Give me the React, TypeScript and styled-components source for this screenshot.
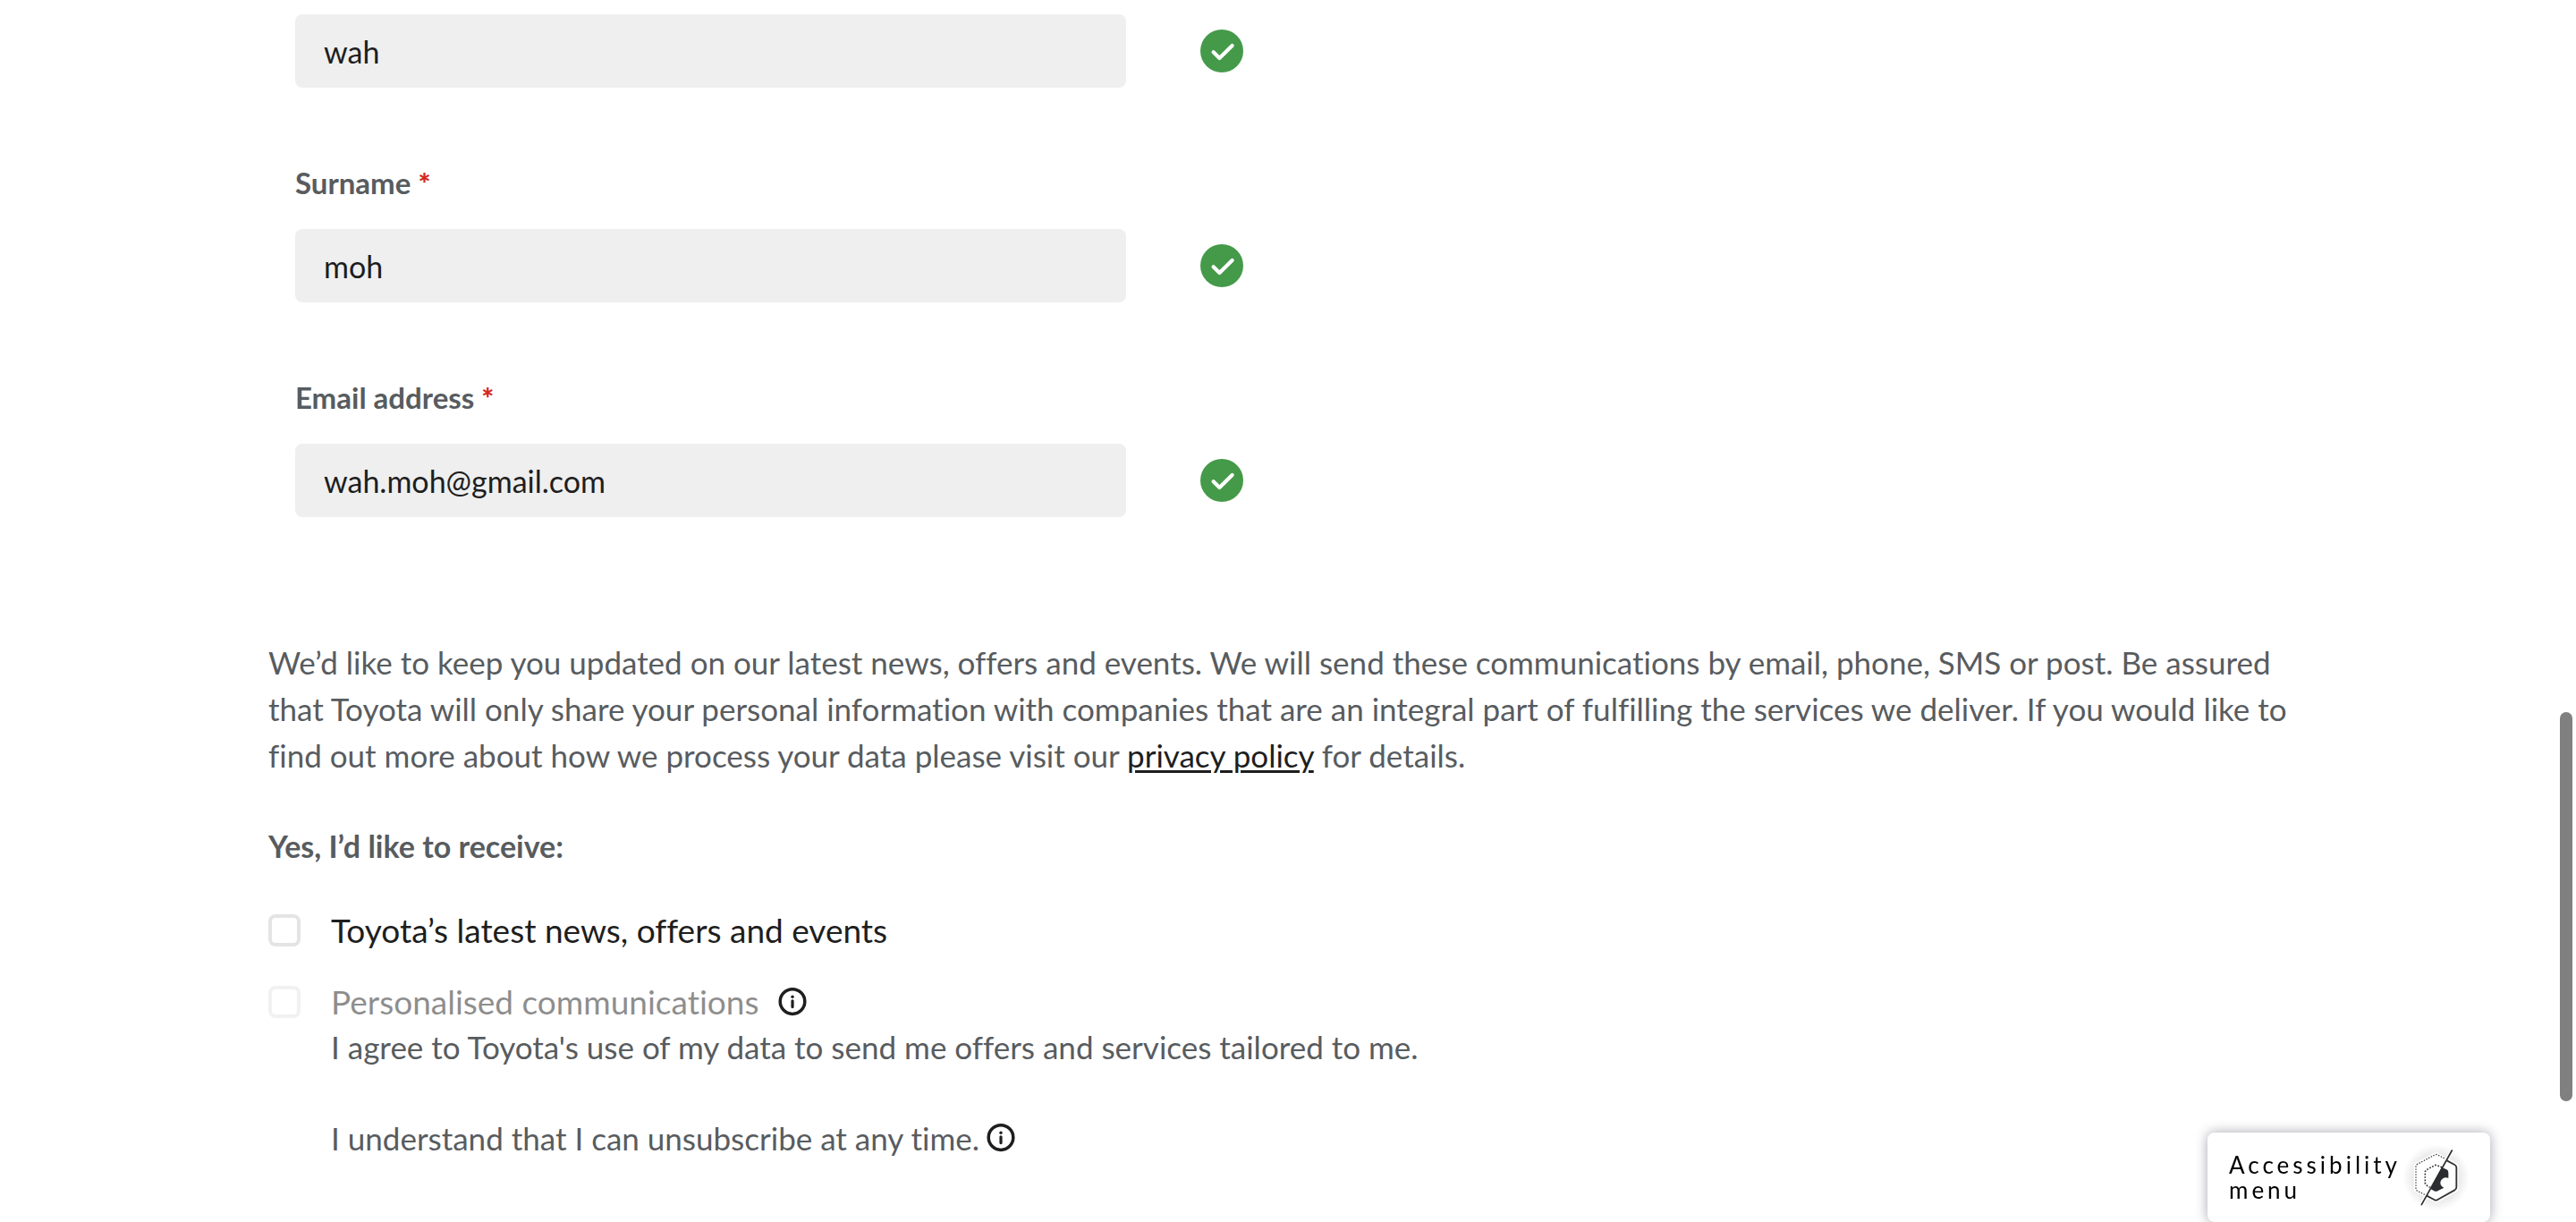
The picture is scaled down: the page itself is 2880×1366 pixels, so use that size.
import React from 'react';
import styled, { createGlobalStyle } from 'styled-components';

const GlobalStyle = createGlobalStyle`
  *, *::before, *::after { box-sizing: border-box; }
  body {
    margin: 0;
    background: #fff;
    color: #585c5f;
    font-family: Lato, "Open Sans", sans-serif;
    font-variant-ligatures: none;
    overflow-x: hidden;
  }
  button, input { font-family: inherit; }
`;

const Page = styled.main`
  max-width: 2280px;
  margin: 0 auto;
  padding: 16px 0 68px;
`;

const Fields = styled.div`
  display: flex;
  flex-direction: column;
  gap: 86px;
  padding: 0 30px;
`;

const Field = styled.div`
  display: flex;
  flex-direction: column;
  gap: 32px;
`;

const FieldLabel = styled.label`
  font-size: 33px;
  font-weight: 700;
  line-height: 40px;
`;

const Required = styled.span`
  color: #d6281c;
  font-weight: 900;
`;

const Control = styled.div`
  display: grid;
  grid-template-columns: minmax(0, 929px) 48px;
  align-items: center;
  gap: 83px;
`;

const TextInput = styled.input`
  width: 100%;
  height: 82px;
  padding: 0 32px;
  border: 0;
  border-radius: 8px;
  background: #efefef;
  color: #1e1e1e;
  font-size: 34px;
`;

const Consent = styled.section`
  display: flex;
  flex-direction: column;
  margin-top: 136px;
`;

const Copy = styled.p`
  margin: 0;
  font-size: 35px;
  line-height: 52px;
`;

const PolicyLink = styled.a`
  color: #1e1e1e;
  text-decoration-thickness: 3px;
  text-underline-offset: 3px;
`;

const Heading = styled.h2`
  margin: 50px 0 44px;
  font-size: 34px;
  font-weight: 700;
  line-height: 52px;
`;

const Options = styled.div`
  display: flex;
  flex-direction: column;
  gap: 32px;
`;

const Option = styled.div`
  display: flex;
  align-items: center;
  gap: 22px;
`;

const OptionLabel = styled.label<{ $muted?: boolean }>`
  display: flex;
  align-items: center;
  gap: 34px;
  color: #1e1e1e;
  font-size: 37px;
  line-height: 48px;
  opacity: ${(p) => (p.$muted ? 0.5 : 1)};
`;

const Checkbox = styled.input`
  appearance: none;
  flex: none;
  width: 36px;
  height: 36px;
  margin: 0;
  border: 4px solid #e4e4e4;
  border-radius: 8px;
  background: #fff;
  &:checked { background: #1e1e1e; }
`;

const Details = styled.div`
  display: flex;
  flex-direction: column;
  gap: 50px;
  padding-left: 70px;
`;

const CopyRow = styled.div`
  display: flex;
  align-items: center;
  gap: 8px;
`;

const InfoButton = styled.button`
  display: flex;
  flex: none;
  padding: 0;
  border: 0;
  background: none;
  color: #1e1e1e;
  cursor: pointer;
`;

const AccessibilityButton = styled.button`
  position: fixed;
  right: 96px;
  bottom: 0;
  display: flex;
  align-items: center;
  gap: 10px;
  height: 100px;
  padding: 0 30px 0 24px;
  border: 0;
  border-radius: 8px;
  background: #fff;
  box-shadow: 0 0 14px rgba(10, 10, 40, 0.36);
  color: #000;
  font-size: 26px;
  line-height: 28px;
  letter-spacing: 4px;
  text-align: left;
  cursor: pointer;
`;

const ScrollThumb = styled.div`
  position: fixed;
  top: 58.27vh;
  right: 4px;
  width: 14px;
  height: 31.85vh;
  border-radius: 7px;
  background: #808080;
`;

function ValidIcon() {
  return (
    <svg width="48" height="48" viewBox="0 0 48 48" role="img" aria-label="Valid">
      <circle cx="24" cy="24" r="24" fill="#449a49" />
      <path d="M14.6 25.2 21.4 32 35.6 17.9" fill="none" stroke="#fff" strokeWidth="4.2" strokeLinecap="round" strokeLinejoin="round" />
    </svg>
  );
}

function InfoIcon() {
  return (
    <svg width="32" height="32" viewBox="0 0 32 32" fill="none" stroke="currentColor" aria-hidden="true">
      <circle cx="16" cy="15.6" r="13.8" strokeWidth="3.5" />
      <circle cx="16" cy="10.2" r="1.7" fill="currentColor" stroke="none" />
      <path d="M16 14.8v6.8" strokeWidth="3.2" strokeLinecap="round" />
    </svg>
  );
}

function ContrastIcon() {
  return (
    <svg width="60" height="72" viewBox="42 30 180 216" fill="none" aria-hidden="true" overflow="visible">
      <defs>
        <radialGradient id="halo">
          <stop offset="0.5" stopColor="#000" stopOpacity="0.13" />
          <stop offset="1" stopColor="#000" stopOpacity="0" />
        </radialGradient>
      </defs>
      <circle cx="131" cy="139" r="112" fill="url(#halo)" />
      <path d="M131 62 198 98V178L131 216 64 180V98Z" fill="#fff" stroke="#fff" strokeWidth="16" strokeLinejoin="round" />
      <path d="M184 48 82 230" stroke="#fff" strokeWidth="13" strokeLinecap="round" />
      <path d="M158 74 136 63Q131 60 126 63L68 94Q63 97 63 103V175Q63 181 68 184L96 198" stroke="#333" strokeWidth="4" strokeDasharray="4 5" />
      <path d="M150 105 134 98Q129 96 124 99L99 113Q94 116 94 122V156Q94 162 99 165L110 172" stroke="#333" strokeWidth="5" strokeDasharray="5 5" />
      <path d="M167 82 193 96Q199 99 199 106V172Q199 178 193 181L136 213Q130 217 124 213L98 199" stroke="#333437" strokeWidth="5.5" strokeLinejoin="round" />
      <path d="M150 105 166 112Q172 115 172 122V141Q163 136 155 141 142 149 146 163 149 170 157 173L136 184Q130 187 124 184L111 176Z" fill="#2c2d30" />
      <path d="M184 48 82 230" stroke="#2c2d30" strokeWidth="5" strokeLinecap="round" />
    </svg>
  );
}

type TextFieldProps = { id: string; type?: string; value: string; label?: string; ariaLabel?: string };

function TextField({ id, type = 'text', value, label, ariaLabel }: TextFieldProps) {
  return (
    <Field>
      {label && (
        <FieldLabel htmlFor={id}>
          {label} <Required>*</Required>
        </FieldLabel>
      )}
      <Control>
        <TextInput id={id} type={type} defaultValue={value} aria-label={ariaLabel} required />
        <ValidIcon />
      </Control>
    </Field>
  );
}

export default function App() {
  return (
    <>
      <GlobalStyle />
      <Page>
        <Fields>
          <TextField id="first-name" value="wah" ariaLabel="First name" />
          <TextField id="surname" label="Surname" value="moh" />
          <TextField id="email" type="email" label="Email address" value="wah.moh@gmail.com" />
        </Fields>

        <Consent>
          <Copy>
            We’d like to keep you updated on our latest news, offers and events. We will send these communications by
            email, phone, SMS or post. Be assured that Toyota will only share your personal information with companies
            that are an integral part of fulfilling the services we deliver. If you would like to find out more about
            how we process your data please visit our <PolicyLink href="#privacy">privacy policy</PolicyLink> for
            details.
          </Copy>
          <Heading>Yes, I’d like to receive:</Heading>
          <Options>
            <Option>
              <OptionLabel htmlFor="news">
                <Checkbox id="news" type="checkbox" />
                Toyota’s latest news, offers and events
              </OptionLabel>
            </Option>
            <Option>
              <OptionLabel htmlFor="personalised" $muted>
                <Checkbox id="personalised" type="checkbox" disabled />
                Personalised communications
              </OptionLabel>
              <InfoButton type="button" aria-label="About personalised communications">
                <InfoIcon />
              </InfoButton>
            </Option>
          </Options>
          <Details>
            <Copy>I agree to Toyota's use of my data to send me offers and services tailored to me.</Copy>
            <CopyRow>
              <Copy>I understand that I can unsubscribe at any time.</Copy>
              <InfoButton type="button" aria-label="About unsubscribing">
                <InfoIcon />
              </InfoButton>
            </CopyRow>
          </Details>
        </Consent>
      </Page>
      <AccessibilityButton type="button">
        <span>
          Accessibility
          <br />
          menu
        </span>
        <ContrastIcon />
      </AccessibilityButton>
      <ScrollThumb />
    </>
  );
}
